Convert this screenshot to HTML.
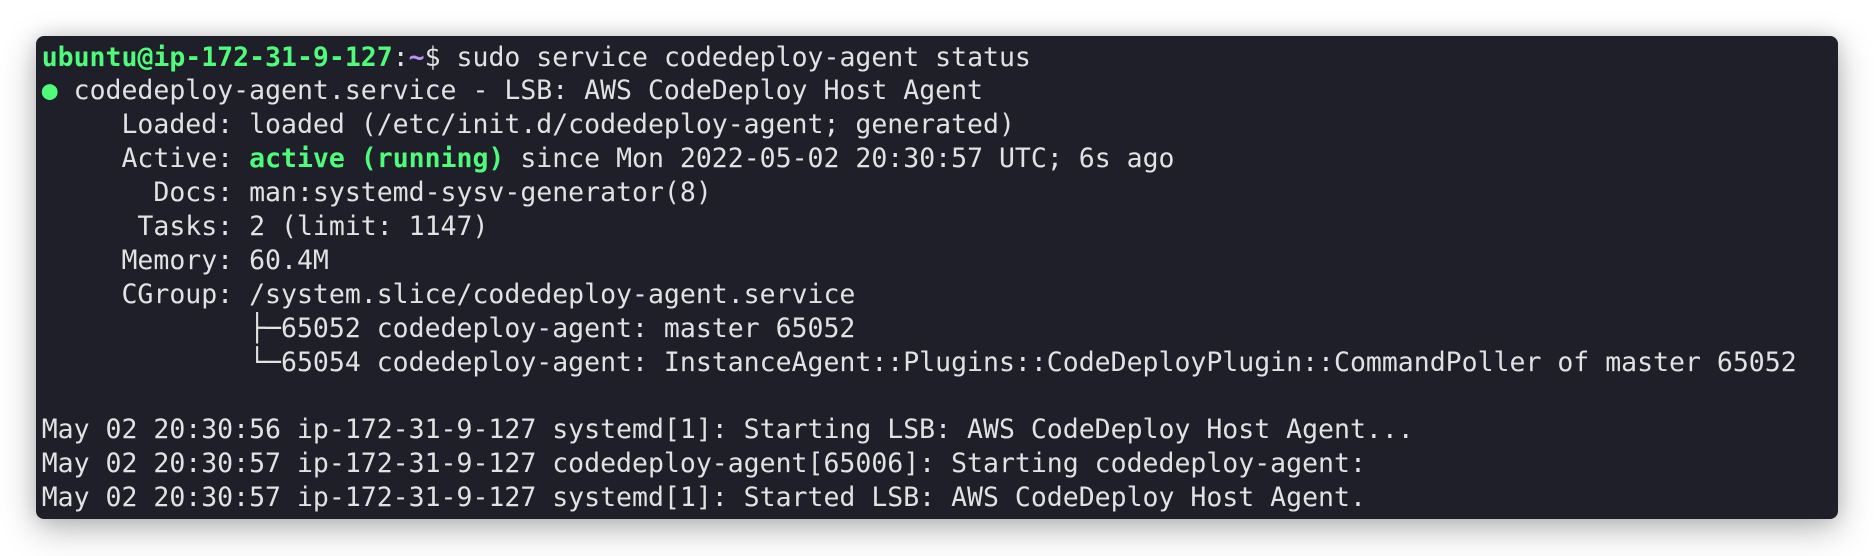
<!DOCTYPE html>
<html><head><meta charset="utf-8"><style>
html,body{margin:0;padding:0;background:#fff;width:1874px;height:556px;overflow:hidden}
.term{position:absolute;left:36px;top:36px;width:1802px;height:483px;background:#1e1f28;border-radius:8px;
box-shadow:0 10px 35px rgba(0,0,0,0.28),0 0 18px rgba(0,0,0,0.12);}
pre{margin:0;position:absolute;left:5.7px;top:4.5px;font-family:"DejaVu Sans Mono","Liberation Mono",monospace;
font-size:26.5px;line-height:33.9px;color:#e2e2e2;white-space:pre}
.g{color:#50fa7b}.b{color:#50fa7b;font-weight:bold}.p{color:#bd93f9;font-weight:bold}
</style></head><body>
<div class="term"><pre><span class="b">ubuntu@ip-172-31-9-127</span>:<span class="p">~</span>$ sudo service codedeploy-agent status
<span class="g">●</span> codedeploy-agent.service - LSB: AWS CodeDeploy Host Agent
     Loaded: loaded (/etc/init.d/codedeploy-agent; generated)
     Active: <span class="b">active (running)</span> since Mon 2022-05-02 20:30:57 UTC; 6s ago
       Docs: man:systemd-sysv-generator(8)
      Tasks: 2 (limit: 1147)
     Memory: 60.4M
     CGroup: /system.slice/codedeploy-agent.service
             ├─65052 codedeploy-agent: master 65052
             └─65054 codedeploy-agent: InstanceAgent::Plugins::CodeDeployPlugin::CommandPoller of master 65052

May 02 20:30:56 ip-172-31-9-127 systemd[1]: Starting LSB: AWS CodeDeploy Host Agent...
May 02 20:30:57 ip-172-31-9-127 codedeploy-agent[65006]: Starting codedeploy-agent:
May 02 20:30:57 ip-172-31-9-127 systemd[1]: Started LSB: AWS CodeDeploy Host Agent.</pre></div>
</body></html>
